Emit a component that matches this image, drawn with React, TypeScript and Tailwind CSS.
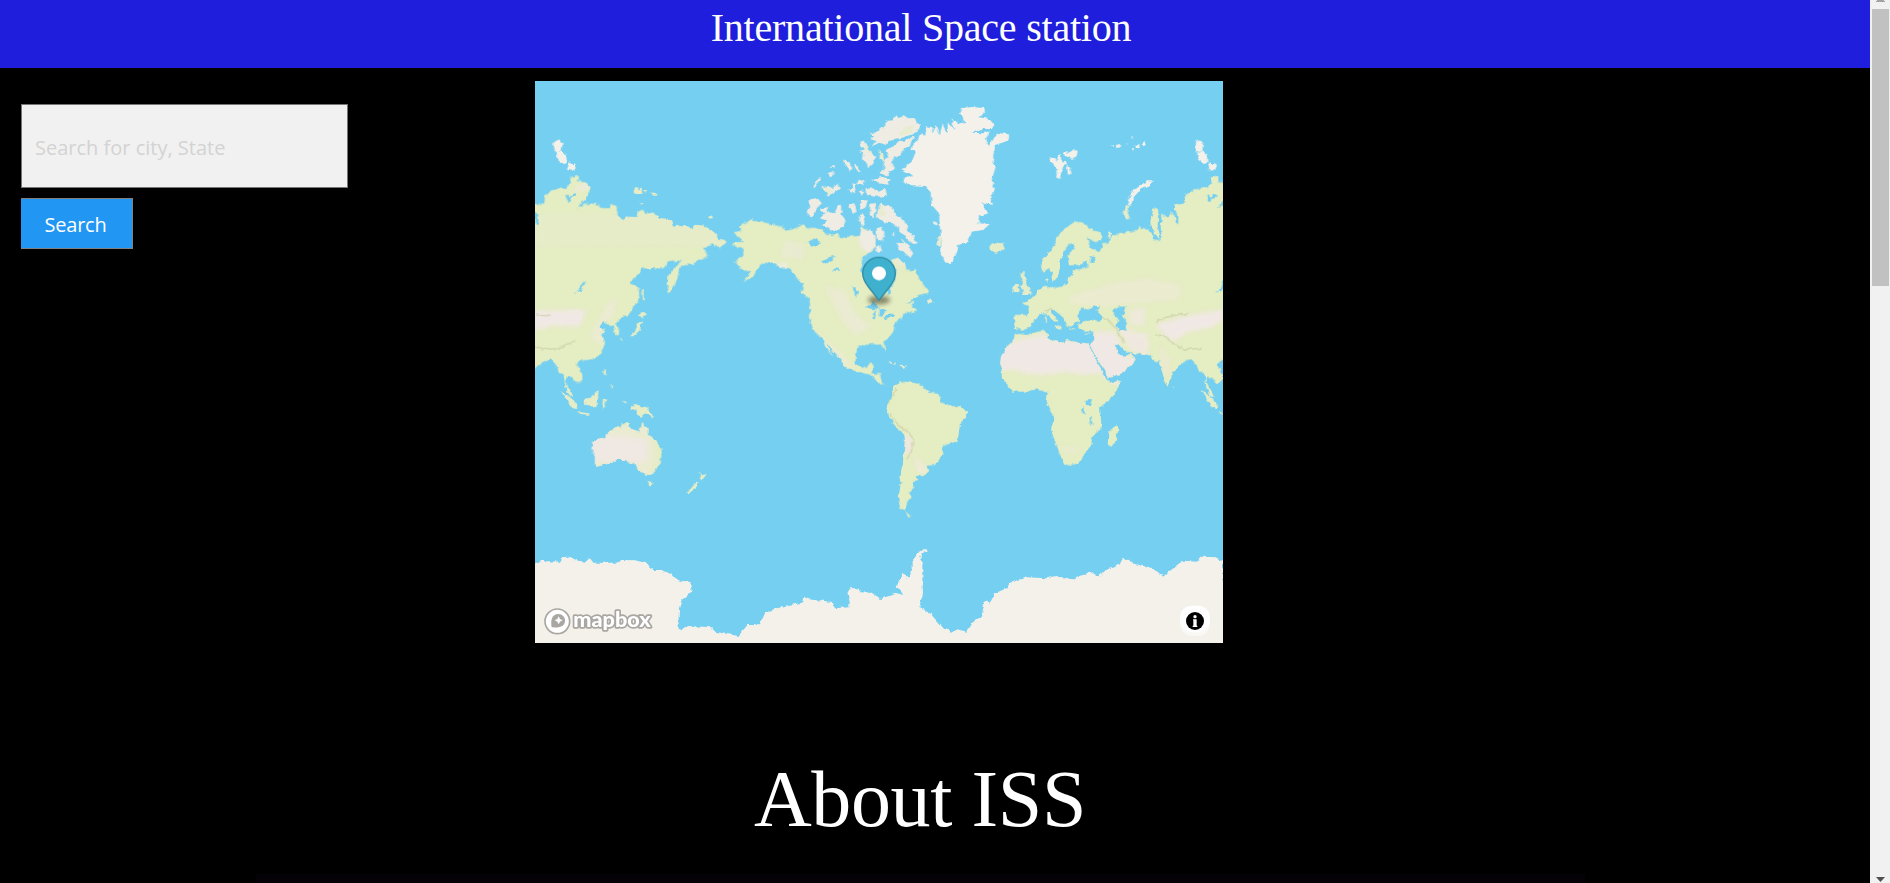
import React from "react";

const EURASIA =
  "M60 708L75 704L95 705L102 690L97 680L80 668L97 666L108 655L120 650L128 640L130 630L150 620L165 626L185 620L215 613L220 590L235 585L232 570L268 566L282 553L270 543L262 552L245 555L222 556L218 530L228 515L240 500L238 490L220 492L215 505L205 512L204 530L195 540L195 565L190 585L185 600L175 602L170 575L160 565L145 578L137 560L138 545L160 520L175 500L185 475L210 445L240 425L265 428L268 436L290 445L315 458L322 470L322 482L300 486L275 473L280 485L288 505L310 515L325 500L320 490L340 488L350 470L380 458L420 455L430 438L460 450L470 462L475 480L490 485L495 465L488 440L490 390L475 385L472 400L466 420L467 436L478 460L492 482L500 470L497 440L500 420L498 400L510 410L520 412L525 398L538 402L542 425L550 434L550 405L537 390L537 374L570 370L572 345L590 333L620 322L635 325L650 308L647 292L670 286L670 303L697 308L709 330L700 350L687 362L667 385L690 374L707 370L732 373L742 384L765 384L770 372L787 378L788 405L804 420L817 410L847 412L852 395L867 388L872 402L897 398L912 415L952 418L957 438L1002 440L1014 450L1020 435L1047 437L1070 450L1087 465L1097 480L1117 485L1110 492L1097 505L1072 488L1062 500L1042 505L1060 520L1057 530L1030 540L1017 552L977 558L972 575L970 595L944 640L937 612L942 585L967 560L984 535L962 548L954 540L940 548L927 565L867 565L827 610L840 618L854 625L854 655L822 705L807 708L782 733L792 745L790 765L782 765L780 745L774 735L757 732L750 722L732 738L740 748L752 748L742 758L752 790L737 825L712 838L680 842L667 852L684 885L684 900L669 910L654 895L637 890L634 903L645 930L654 945L648 948L634 920L627 880L612 875L605 855L590 838L575 840L550 860L530 880L528 900L518 917L508 900L497 860L495 840L480 848L470 825L430 822L405 818L388 812L370 792L358 795L380 830L395 830L403 820L422 838L400 865L375 882L337 892L328 870L300 825L285 795L298 780L298 755L270 755L250 745L250 730L285 718L320 722L322 712L308 695L285 690L262 685L250 705L252 722L228 740L212 736L205 712L190 700L170 686L168 698L192 725L180 724L160 705L140 697L125 715L105 738L88 752L60 745L57 725Z";
const AFRICA =
  "M70 762L95 765L125 755L155 752L160 775L200 790L215 780L250 788L275 790L285 805L318 870L332 895L345 908L375 902L370 925L345 955L315 982L320 1045L290 1070L290 1095L277 1110L250 1150L210 1157L203 1140L185 1100L168 1050L177 1010L155 965L158 938L125 928L90 935L55 935L35 910L20 890L20 860L15 850L20 825L35 800L52 785L60 765Z";
const NORTH_AMERICA =
  "M-95 457L-70 452L-80 440L-60 428L-40 418L0 428L30 435L50 440L62 452L85 448L115 432L125 445L150 443L175 455L185 465L220 462L225 475L250 470L285 468L290 442L300 445L325 475L330 500L315 520L292 530L288 570L310 590L345 605L362 630L368 645L375 640L375 625L390 600L395 570L385 555L378 540L395 535L420 552L425 570L440 575L450 565L465 600L480 625L492 628L490 638L460 645L420 672L450 662L440 680L460 690L430 700L415 698L410 715L390 730L385 755L370 775L355 785L362 815L352 800L345 790L320 792L280 798L272 820L272 850L290 865L305 862L315 848L325 850L320 880L345 882L350 908L365 918L340 908L320 885L275 875L235 858L230 840L205 815L185 785L190 808L205 830L185 808L172 775L150 755L135 725L135 660L110 640L115 610L100 600L75 565L45 560L25 550L0 548L-8 550L-25 570L-35 590L-65 605L-40 575L-70 570L-90 545L-65 525L-65 505L-100 495L-90 487L-62 485Z";
const SOUTH_AMERICA =
  "M40 20L60 8L75 5L115 10L150 38L175 42L185 68L210 78L240 80L262 95L260 110L240 130L235 170L228 185L190 198L188 225L165 255L140 257L145 275L135 285L110 288L112 300L98 305L100 325L88 335L95 352L80 370L75 392L60 385L55 360L62 310L58 290L68 255L75 180L72 160L45 140L18 92L25 65L35 55Z";
const GREENLAND =
  "M410 268L440 245L452 215L438 205L462 172L470 155L480 168L486 138L503 143L500 158L515 138L525 165L532 133L548 162L548 128L568 150L560 115L582 132L602 125L582 100L592 84L620 81L658 84L660 98L640 112L672 116L688 135L680 148L650 146L620 158L655 160L674 153L663 178L672 198L685 172L705 160L731 162L732 178L712 188L686 196L690 215L682 250L692 260L680 300L690 330L675 350L684 375L650 366L670 400L642 408L640 430L674 432L655 450L620 455L610 485L580 495L575 515L560 550L540 547L528 520L530 485L525 445L522 400L500 375L497 340L480 318L430 315L415 298L445 285L425 275Z";
const ANTARCTICA =
  "M0 550L20 543L75 545L78 532L100 530L145 548L165 535L175 548L245 548L260 540L300 541L330 548L355 570L380 570L410 585L430 600L455 605L472 622L465 640L440 660L432 685L430 745L442 748L460 738L530 742L540 755L610 768L640 732L675 733L690 700L710 690L760 675L805 668L807 650L820 658L890 665L900 685L943 682L943 650L937 640L945 625L970 625L975 637L1010 638L1038 657L1080 643L1070 635L1105 645L1085 618L1105 578L1120 595L1130 575L1130 550L1146 522L1162 508L1180 508L1180 513L1160 520L1156 532L1162 545L1162 600L1164 640L1153 680L1185 700L1225 745L1250 755L1270 748L1295 755L1310 730L1340 708L1350 660L1365 668L1380 640L1415 625L1425 608L1475 592L1535 595L1565 588L1615 598L1665 575L1690 592L1715 568L1755 552L1762 538L1780 536L1790 550L1855 565L1885 590L1905 570L1945 542L1985 545L2000 530L2035 532L2064 545V790H0Z";
const AUSTRALIA =
  "M172 185L185 178L212 170L218 155L232 150L238 140L255 145L262 130L285 130L283 142L312 158L322 127L330 140L340 148L342 165L358 178L378 205L380 225L370 258L358 276L340 284L325 282L310 270L300 248L288 252L275 240L245 240L215 252L185 260L180 255L180 230L173 215Z";

const ARCTIC_WHITE = [
  "M313 162L335 155L348 145L360 135L368 120L385 118L390 106L405 115L415 105L430 115L448 114L455 128L467 135L458 155L430 165L405 178L380 180L360 195L342 188L320 200L332 182L316 178L328 168Z",
  "M362 212L390 195L402 182L418 182L448 168L432 198L415 208L405 225L385 235L378 248L390 268L372 275L368 290L345 278L358 265L352 245L370 232Z",
  "M285 190L298 180L308 198L322 222L336 232L325 245L312 265L290 232L298 222L284 215L296 208Z",
  "M302 330L318 322L340 335L362 326L365 348L330 350L304 345Z",
  "M316 372L332 368L334 395L325 415L314 408Z",
  "M340 385L348 370L358 378L372 375L385 390L390 405L405 412L420 428L430 435L425 450L445 468L455 490L445 492L425 475L410 465L400 445L385 430L365 428L345 422L335 410Z",
  "M398 488L415 490L408 475L425 492L445 520L435 535L418 520L400 505Z",
  "M335 445L350 440L358 460L350 485L335 478Z",
  "M130 360L150 354L172 368L155 385L150 398L138 412L125 400L133 385Z",
  "M165 385L190 382L185 395L208 400L220 375L228 378L230 405L242 420L235 440L205 452L190 440L170 435L185 425L165 415L180 400Z",
  "M252 372L268 370L275 395L262 402L256 390Z",
  "M286 362L308 360L302 382L288 390Z",
  "M280 405L297 402L302 425L290 440Z",
  "M290 460L315 450L332 468L325 495L308 515L293 500Z",
  "M145 318L160 292L172 293L160 308L150 322Z",
  "M168 322L190 318L200 328L215 312L228 325L205 342L185 350L190 335Z",
  "M233 238L252 248L262 262L254 274L240 255Z",
  "M268 253L280 260L286 277L272 274Z",
  "M320 300L350 290L376 298L370 314L340 310Z",
  "M262 310L272 312L270 340L250 328L264 325Z",
  "M280 299L298 302L296 315L280 311Z",
  "M282 332L298 332L290 348Z",
  "M188 279L202 275L207 286L195 292Z",
  "M193 262L210 256L208 265Z",
  "M332 500L345 495L352 515L336 518Z",
  "M500 420L512 425L520 438L505 432Z",
  "M384 460L390 458L390 470Z",
];

const ISLANDS_C = [
  "M78 577L90 577L86 590L94 600L100 622L110 635L104 645L80 645L88 632L78 620L84 610L76 592Z",
  "M60 612L72 612L70 635L55 640L55 625Z",
  "M0 490L15 493L22 486L28 500L15 515L0 518L-12 510L-14 495L-8 490Z",
  "M385 405L393 375L402 378L397 395L406 418L394 418Z",
  "M178 742L198 738L194 750Z",
  "M150 708L156 710L155 730L150 728Z",
  "M222 745L240 750L225 752Z",
  "M266 762L284 760L274 764Z",
  "M534 918L538 920L537 928Z",
  "M150 600L160 598L156 608Z",
  "M342 458L350 458L344 480L338 474Z",
];

const ISLANDS_C_WHITE = [
  "M163 232L178 235L186 245L188 225L197 222L200 248L212 245L216 255L205 258L198 280L192 297L183 292L188 272L182 262L170 250Z",
  "M206 215L222 218L228 210L248 212L245 228L232 240L220 232L206 226Z",
  "M215 258L224 262L230 282L219 284Z",
  "M398 375L406 345L418 328L438 313L458 301L472 301L467 317L442 327L424 342L414 354L408 378Z",
  "M422 195L432 192L434 204L422 204Z",
  "M440 188L450 182L450 194L443 195Z",
  "M348 196L356 196L354 202Z",
  "M366 192L374 188L378 202L362 204Z",
  "M395 191L403 191L401 197Z",
  "M407 204L413 204L413 213Z",
  "M409 170L413 168L412 178Z",
];

/* Islands just east of the date-line seam; drawn once on each side of the map. */
const ISLANDS_SEAM_WHITE = [
  "M58 186L72 178L82 190L80 214L63 217L57 205Z",
  "M65 218L80 214L94 223L95 250L84 252L66 238Z",
  "M96 270L103 246L110 253L120 250L125 265L112 272Z",
];
const ISLANDS_SEAM = [
  "M298 322L306 322L312 330L320 325L322 342L300 342Z",
  "M325 330L336 330L330 340Z",
  "M345 338L362 338L366 344L350 344Z",
  "M314 362L326 372L320 376Z",
  "M519 411L530 406L534 414L524 416Z",
  "M320 625L326 628L326 650L330 660L324 664Z",
  "M318 694L324 692L336 704L325 708L322 716L310 708L320 704Z",
  "M311 726L320 726L315 750L295 769L285 769L300 755L304 742Z",
  "M258 772L264 776L262 782Z",
  "M205 866L214 864L212 876L214 888L206 882Z",
  "M228 912L236 922L228 926Z",
  "M76 932L90 940L112 958L126 975L126 988L112 984L98 965Z",
  "M90 918L104 928L114 950L106 950Z",
  "M148 955L165 955L178 940L190 930L190 950L184 978L165 980L150 972Z",
  "M204 956L218 958L216 961L208 962L214 978L206 986L202 972Z",
  "M262 962L276 966L270 970Z",
  "M285 978L300 972L340 985L358 1014L345 1006L330 1000L318 1010L306 1004L305 994L288 986Z",
  "M128 996L162 1000L164 1005L135 1002Z",
  "M338 1204L352 1206L350 1216L342 1216Z",
  "M494 1178L502 1184L514 1184L506 1194L500 1202L494 1196L498 1188Z",
  "M482 1206L490 1206L486 1218L466 1240L454 1238L464 1226Z",
];

const WATER_B = [
  "M125 488L150 474L168 490L155 498L140 504L138 492Z",
  "M168 545L195 530L212 528L198 545L180 552Z",
  "M200 572L212 564L230 572L215 572Z",
  "M262 620L270 618L280 640L275 650L268 640Z",
  "M302 682L325 665L345 682L325 688Z",
  "M325 700L333 688L330 718L322 716Z",
  "M340 685L362 690L350 712L342 705Z",
  "M356 710L385 700L388 706L360 718Z",
];
const WATER_C = [
  "M352 692L375 676L390 680L388 700L380 705L396 722L392 752L370 750L362 735L372 725L358 705Z",
  "M250 712L262 682L280 692L300 676L315 680L302 692L325 712L322 722L290 718L262 722Z",
  "M264 545L275 541L278 555L266 558Z",
  "M286 528L298 532L298 548L288 548Z",
  "M638 342L648 350L662 342L668 348L650 354L646 366L638 364Z",
  "M658 640L672 632L688 600L692 612L680 632Z",
  "M272 962L288 960L288 974L272 976Z",
  "M258 985L264 984L272 1005L262 998Z",
  "M284 1012L290 1012L292 1036L286 1036Z",
];

function Shapes({ paths, fill }: { paths: string[]; fill: string }) {
  return (
    <g fill={fill}>
      {paths.map((d) => (
        <path key={d} d={d} />
      ))}
    </g>
  );
}

function WorldMap() {
  return (
    <svg className="block h-full w-full" viewBox="0 3 2064 1686" preserveAspectRatio="none">
      <defs>
        <filter id="coast" x="0" y="0" width="2064" height="1690" filterUnits="userSpaceOnUse" colorInterpolationFilters="sRGB">
          <feTurbulence type="fractalNoise" baseFrequency="0.07" numOctaves="2" seed="7" />
          <feDisplacementMap in="SourceGraphic" scale="13" xChannelSelector="R" yChannelSelector="G" />
        </filter>
        <filter id="soft" x="-30%" y="-30%" width="160%" height="160%">
          <feGaussianBlur stdDeviation="6" />
        </filter>
        <filter id="shade" x="-50%" y="-80%" width="200%" height="260%">
          <feGaussianBlur stdDeviation="6" />
        </filter>
        <clipPath id="land">
          <path d={EURASIA} transform="translate(1380 0)" />
          <path d={EURASIA} transform="translate(-542 0)" />
          <path d={AFRICA} transform="translate(1380 0)" />
          <path d={NORTH_AMERICA} transform="translate(690 0)" />
          <path d={SOUTH_AMERICA} transform="translate(1035 900)" />
          <path d={AUSTRALIA} transform="translate(0 900)" />
        </clipPath>
      </defs>
      <rect y="0" width="2064" height="1700" fill="#75cff0" />
      <g filter="url(#coast)">
        <g fill="#e5edc2">
          <path d={EURASIA} transform="translate(1380 0)" />
          <path d={EURASIA} transform="translate(-542 0)" />
          <path d={AFRICA} transform="translate(1380 0)" />
          <path d={NORTH_AMERICA} transform="translate(690 0)" />
          <path d={SOUTH_AMERICA} transform="translate(1035 900)" />
          <path d={AUSTRALIA} transform="translate(0 900)" />
          <path d="M712 1032L716 1045L708 1080L695 1100L683 1095L686 1055L700 1045Z" transform="translate(1035 0)" />
          <path d="M75 393L95 410L85 412Z" transform="translate(1035 900)" />
        </g>
        <g clipPath="url(#land)">
          <g filter="url(#soft)">
            <path d="M1380 810L1440 780L1530 762L1550 780L1670 780L1715 875L1650 884L1590 876L1520 886L1480 882L1440 870L1380 870Z" fill="#f0e8e4" />
            <path d="M1650 790L1685 755L1740 755L1760 800L1770 830L1815 830L1760 895L1705 895Z" fill="#f0e8e4" />
            <path d="M1725 895L1765 895L1750 915L1730 915Z" fill="#efe9de" />
            <path d="M1745 740L1840 765L1840 825L1790 815Z" fill="#f0e8e0" />
            <path d="M1860 735L1960 705L2070 690L2070 720L2020 745L1960 755L1920 785L1890 765Z" fill="#f0e8e4" />
            <path d="M-10 695L50 690L155 690L135 740L90 740L60 735L-10 755Z" fill="#f0e8e4" />
            <path d="M1600 650L1730 610L1840 595L1940 615L1930 660L1800 670L1700 680L1610 672Z" fill="#ebebd0" />
            <path d="M1780 690L1830 680L1830 735L1785 735Z" fill="#eee9da" />
            <path d="M1875 790L1905 840L1905 895L1880 870Z" fill="#ebe9d0" />
            <path d="M0 400H580V500H0Z" fill="#e6ecc8" />
            <path d="M130 315L165 310L160 330L115 335Z" fill="#eceadb" />
            <path d="M220 665L245 655L235 710L205 730L205 800L165 770Z" fill="#ebebd3" />
            <path d="M150 1060L345 1020L385 1070L385 1190H170Z" fill="#eaebd0" />
            <path d="M160 1080L200 1066L270 1068L335 1080L340 1140L310 1150L160 1145Z" fill="#f0e8e2" />
            <path d="M355 1070L390 1090L370 1180L345 1185L365 1140Z" fill="#e5edc2" />
            <path d="M870 620L930 630L960 700L1010 740L960 770L920 720Z" fill="#eaebd2" />
            <path d="M750 480L810 495L805 540L740 530Z" fill="#e9ebd0" />
            <path d="M700 548L760 555L755 570L720 562Z" fill="#f0eee6" />
            <path d="M965 440L1020 450L1025 500L1005 520L975 500Z" fill="#f0e9e0" />
            <path d="M820 740L900 800L960 860L920 860L850 810Z" fill="#eaebd0" />
            <path d="M1070 520L1110 530L1120 560L1085 560Z" fill="#ecebd6" />
            <path d="M1104 1060L1128 1075L1132 1105L1118 1125L1108 1120Z" fill="#f0e6e2" />
            <path d="M1135 1130L1160 1145L1178 1180L1150 1180Z" fill="#eeead8" />
            <path d="M1560 1090L1580 1100L1640 1105L1620 1120L1595 1120Z" fill="#eaebd0" />
          </g>
          <g fill="none" stroke="#c9cda3" strokeWidth="5" opacity="0.6">
            <path d="M1860 765L1885 765L1920 795L1950 808L2000 805M1860 725L1900 710L1960 700M1700 710L1730 730L1770 790M1530 695L1550 685M0 800L30 808L75 805L120 780M0 705L45 708M1060 920L1068 950L1062 970M1065 1000L1085 1030L1110 1050L1135 1075L1130 1110L1115 1140M1085 925L1068 955" />
          </g>
        </g>
        <g transform="translate(690 0)">
          <path d={GREENLAND} fill="#f4f1eb" />
          <Shapes paths={ARCTIC_WHITE} fill="#efece3" />
          <g fill="#e8ecd0">
            <path d="M340 380L352 378L362 400L345 412Z" />
            <path d="M170 325L188 322L205 335L190 345Z" />
            <path d="M398 165L420 142L450 135L440 158L415 165Z" />
            <path d="M340 210L355 225L358 245L345 235Z" />
            <path d="M298 190L310 205L322 230L305 220Z" />
            <path d="M518 465L530 468L528 502L514 495Z" />
            <path d="M485 665L495 655L508 665L494 670Z" />
            <path d="M370 848L392 852L378 850ZM405 855L425 859L410 862Z" stroke="#e8ecd0" strokeWidth="3" />
          </g>
          <Shapes paths={WATER_B} fill="#75cff0" />
        </g>
        <g transform="translate(1380 0)">
          <Shapes paths={ISLANDS_C} fill="#e5edc8" />
          <Shapes paths={ISLANDS_C_WHITE} fill="#f4f1eb" />
          <Shapes paths={WATER_C} fill="#75cff0" />
        </g>
        <Shapes paths={ISLANDS_SEAM_WHITE} fill="#f4f1eb" />
        <Shapes paths={ISLANDS_SEAM} fill="#e6edc6" />
        <g transform="translate(1922 0)">
          <Shapes paths={ISLANDS_SEAM_WHITE} fill="#f4f1eb" />
          <Shapes paths={ISLANDS_SEAM} fill="#e6edc6" />
        </g>
        <g transform="translate(-542 0)">
          <path d="M638 342L648 350L662 342L668 348L650 354L646 366L638 364ZM658 640L672 632L688 600L692 612L680 632ZM542 396L552 405L552 436L544 430Z" fill="#75cff0" />
        </g>
      </g>
      <path d={ANTARCTICA} transform="translate(0 900)" fill="#f4f1eb" filter="url(#coast)" />
      <path d="M-5 1560H425V1700H-5ZM440 1672H2070V1700H440Z" fill="#f4f1eb" />
      <path d="M2040 1500H2070V1700H2040Z" fill="#f4f1eb" />
      <g transform="translate(690 0)">
        <ellipse cx="342" cy="660" rx="34" ry="13" fill="#4a4a32" opacity="0.6" filter="url(#shade)" />
        <path
          d="M342 532C314 532 293 554 293 580C293 598 302 610 312 623L342 660L372 623C382 610 391 598 391 580C391 554 370 532 342 532Z"
          fill="#3fb1ce"
          stroke="#318ba2"
          strokeWidth="4"
        />
        <circle cx="342" cy="580" r="21" fill="#fff" />
      </g>
      <g transform="translate(0 900)">
        <circle cx="67" cy="724" r="37" fill="#fff" stroke="#aaa7a3" strokeWidth="5" />
        <path d="M50 742C46 722 50 702 70 702C82 702 90 711 90 722C90 740 70 744 50 742Z" fill="#aaa7a3" />
        <path d="M71 709L75 717L83 721L75 725L71 733L67 725L59 721L67 717Z" fill="#fff" />
        <text
          x="115"
          y="741"
          textLength="232"
          lengthAdjust="spacingAndGlyphs"
          className="font-['Lato',sans-serif] text-[62px] font-black"
          fill="#fff"
          stroke="#aaa7a3"
          strokeWidth="10"
          strokeLinejoin="round"
          paintOrder="stroke"
        >
          mapbox
        </text>
      </g>
      <g transform="translate(1035 900)">
        <rect x="900" y="677" width="90" height="91" rx="36" fill="#fff" opacity="0.5" />
        <path d="M900 713A36 36 0 0 1 936 677H954A36 36 0 0 1 990 713V722A45 35 0 0 1 900 722Z" fill="#fff" />
        <circle cx="945" cy="723" r="27" fill="#000" />
        <circle cx="945" cy="710" r="5" fill="#fff" />
        <path d="M939 718H950V737H952V741H938V737H940V721H939Z" fill="#fff" />
      </g>
    </svg>
  );
}

function Scrollbar() {
  return (
    <div className="flex w-5 shrink-0 flex-col items-center justify-between bg-[#f1f1f1]">
      <div className="flex w-full flex-col items-center">
        <svg className="h-[9px] w-[9px]" viewBox="0 0 9 9">
          <path d="M1 0H8V1H9V2H0V1H1Z" fill="#a3a3a3" />
        </svg>
        <div className="mr-px ml-0.5 h-[277px] w-[17px] bg-[#c1c1c1]" />
      </div>
      <svg className="mb-px h-[5px] w-[9px]" viewBox="0 0 9 5">
        <path d="M0 0H9L4.5 5Z" fill="#505050" />
      </svg>
    </div>
  );
}

export default function App() {
  return (
    <div className="flex h-[883px] w-full overflow-hidden bg-black text-white">
      <div className="flex min-w-0 flex-1 flex-col">
        <header className="h-[68px] bg-[#1e1edc] pt-[5px] pr-7 text-center font-['Liberation_Serif',serif] text-[40px] leading-[46px] tracking-[-0.22px]">
          International Space station
        </header>
        <main className="flex h-[575px] shrink-0">
          <form className="flex w-[535px] shrink-0 flex-col items-start gap-2.5 pt-9 pl-[21px]">
            <input
              className="h-[84px] w-[327px] border border-[#767676] bg-[#f1f1f1] px-[13px] pt-0.5 font-['Open_Sans',sans-serif] text-[20px] outline-none placeholder:text-[#d3d3d3]"
              placeholder="Search for city, State"
            />
            <button
              type="button"
              className="h-[51px] w-28 border border-l-0 border-[#808080] bg-[#2196f3] pt-[3px] pr-0.5 font-['Open_Sans',sans-serif] text-[20px] leading-none tracking-[-0.2px]"
            >
              Search
            </button>
          </form>
          <div className="mt-[13px] h-[562px] w-[688px] overflow-hidden">
            <WorldMap />
          </div>
        </main>
        <h1 className="mt-[110px] pr-[30px] text-center font-['Liberation_Serif',serif] text-[80px] leading-[92px] tracking-[-0.4px]">
          About ISS
        </h1>
        <div className="mt-auto mr-[285px] ml-[256px] h-[9px] bg-[#040207]" />
      </div>
      <Scrollbar />
    </div>
  );
}
